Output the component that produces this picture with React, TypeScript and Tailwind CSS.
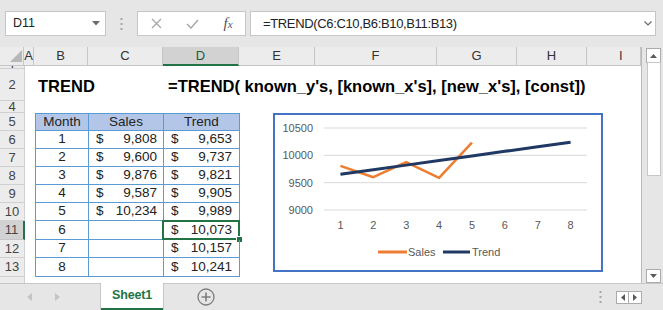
import React from "react";

const cols = [
  { id: "A", w: "w-[10px]", pad: "justify-center" },
  { id: "B", w: "w-[54px]", pad: "justify-center" },
  { id: "C", w: "w-[75px]", pad: "justify-center" },
  { id: "D", w: "w-[76px]", pad: "justify-center" },
  { id: "E", w: "w-[76px]", pad: "justify-center" },
  { id: "F", w: "w-[122px]", pad: "justify-center" },
  { id: "G", w: "w-[80px]", pad: "justify-center" },
  { id: "H", w: "w-[70px]", pad: "justify-center" },
  { id: "I", w: "w-[54px]", pad: "justify-start pl-[32px]" },
];

const data = [
  { r: "6", m: "1", s: "9,808", t: "9,653", h: "h-[18px]" },
  { r: "7", m: "2", s: "9,600", t: "9,737", h: "h-[18px]" },
  { r: "8", m: "3", s: "9,876", t: "9,821", h: "h-[18px]" },
  { r: "9", m: "4", s: "9,587", t: "9,905", h: "h-[18px]" },
  { r: "10", m: "5", s: "10,234", t: "9,989", h: "h-[18px]" },
  { r: "11", m: "6", s: "", t: "10,073", h: "h-[19px]" },
  { r: "12", m: "7", s: "", t: "10,157", h: "h-[18px]" },
  { r: "13", m: "8", s: "", t: "10,241", h: "h-[19px]" },
];

const sales = [9808, 9600, 9876, 9587, 10234];
const trend = [9653, 9737, 9821, 9905, 9989, 10073, 10157, 10241];

function RowHead({ n, active }: { n: string; active?: boolean }) {
  if (active) {
    return (
      <div className="w-[25px] shrink-0 flex items-center justify-center bg-[#d2d2d2] border-r-2 border-r-[#217346] border-b border-b-[#c6c6c6] text-[13px] text-[#444] overflow-hidden">
        {n}
      </div>
    );
  }
  return (
    <div className="w-[25px] shrink-0 flex items-center justify-center bg-[#ececec] border-r border-b border-[#d0d0d0] text-[13px] text-[#444] overflow-hidden">
      {n}
    </div>
  );
}

function Chart() {
  const X = (i: number) => 49 + 32.875 * (i - 0.5);
  const Y = (v: number) => 95 - ((v - 9000) * 82) / 1500;
  const grid = [10500, 10000, 9500, 9000];
  return (
    <div className="absolute left-[273px] top-[66px] w-[330px] h-[159px] border-2 border-[#4472c4] bg-white">
      <svg width="326" height="155" className="text-[11px]">
        {grid.map((g) => (
          <g key={g}>
            <line x1="49" x2="312" y1={Y(g)} y2={Y(g)} stroke="#d9d9d9" strokeWidth="1" />
            <text x="38" y={Y(g) + 4} textAnchor="end" fill="#595959">
              {g}
            </text>
          </g>
        ))}
        {trend.map((_, i) => (
          <text key={i} x={X(i + 1)} y="114" textAnchor="middle" fill="#595959">
            {i + 1}
          </text>
        ))}
        <polyline
          points={sales.map((v, i) => `${X(i + 1)},${Y(v)}`).join(" ")}
          fill="none"
          stroke="#ed7d31"
          strokeWidth="2.5"
          strokeLinejoin="round"
        />
        <polyline
          points={trend.map((v, i) => `${X(i + 1)},${Y(v)}`).join(" ")}
          fill="none"
          stroke="#203864"
          strokeWidth="3"
          strokeLinejoin="round"
        />
        <line x1="103" x2="132" y1="137" y2="137" stroke="#ed7d31" strokeWidth="3" />
        <text x="133" y="141" fill="#595959">Sales</text>
        <line x1="168" x2="195" y1="137" y2="137" stroke="#203864" strokeWidth="3" />
        <text x="197" y="141" fill="#595959">Trend</text>
      </svg>
    </div>
  );
}

export default function App() {
  return (
    <div className="w-[663px] h-[310px] overflow-hidden bg-[#e6e6e6] font-['Liberation_Sans',Arial,sans-serif] text-[#222]">
      {/* formula bar */}
      <div className="h-[47px] flex items-start pt-[11px] pl-[5px]">
        <div className="w-[101px] h-[25px] bg-white border border-[#c6c6c6] flex items-center justify-between pl-[7px] pr-[5px] text-[12.5px]">
          <span>D11</span>
          <svg width="8" height="5" viewBox="0 0 8 5">
            <polygon points="0,0 8,0 4,4.5" fill="#6b6b6b" />
          </svg>
        </div>
        <div className="w-[31px] h-[25px] flex items-center justify-center">
          <svg width="3" height="12" viewBox="0 0 3 12">
            <rect x="0.5" y="0" width="2" height="2" fill="#a6a6a6" />
            <rect x="0.5" y="5" width="2" height="2" fill="#a6a6a6" />
            <rect x="0.5" y="10" width="2" height="2" fill="#a6a6a6" />
          </svg>
        </div>
        <div className="w-[109px] h-[25px] bg-white border border-[#c6c6c6] grid grid-cols-[36px_36px_36px] items-center">
          <div className="flex justify-center">
            <svg width="11" height="11" viewBox="0 0 11 11">
              <path d="M1 1L10 10M10 1L1 10" stroke="#a8a8a8" strokeWidth="1.3" />
            </svg>
          </div>
          <div className="flex justify-center">
            <svg width="13" height="10" viewBox="0 0 13 10">
              <path d="M1 5L5 9L12 1" stroke="#a8a8a8" strokeWidth="1.5" fill="none" />
            </svg>
          </div>
          <div className="flex justify-center items-baseline font-['Liberation_Serif',serif] italic text-[#555]">
            <span className="text-[15px]">f</span>
            <span className="text-[11px]">x</span>
          </div>
        </div>
        <div className="ml-[4px] w-[406px] h-[25px] bg-white border border-[#c6c6c6] flex items-center justify-between pl-[12px] pr-[3px]">
          <span className="text-[13px] tracking-[-0.35px]">=TREND(C6:C10,B6:B10,B11:B13)</span>
          <svg width="8" height="5" viewBox="0 0 8 5">
            <path d="M0.5 0.5L4 4L7.5 0.5" stroke="#6b6b6b" strokeWidth="1.2" fill="none" />
          </svg>
        </div>
      </div>

      {/* sheet + scrollbar */}
      <div className="flex h-[236px]">
        <div className="relative w-[642px] flex flex-col bg-white border-r border-[#b9b9b9]">
          {/* column headers */}
          <div className="flex h-[19px] shrink-0">
            <div className="w-[25px] bg-[#ececec] border-r border-b border-[#c6c6c6] relative">
              <svg width="25" height="19" className="absolute left-0 top-0">
                <polygon points="22,3 22,15 10,15" fill="#b7b7b7" />
              </svg>
            </div>
            {cols.map((c) =>
              c.id === "D" ? (
                <div
                  key={c.id}
                  className={`${c.w} shrink-0 flex items-center justify-center bg-[#d2d2d2] border-r border-r-[#c6c6c6] border-b-2 border-b-[#217346] text-[13px] text-[#1e5d38]`}
                >
                  {c.id}
                </div>
              ) : (
                <div
                  key={c.id}
                  className={`${c.w} shrink-0 flex items-center ${c.pad} bg-[#ececec] border-r border-b border-[#c6c6c6] text-[13px] text-[#333] overflow-hidden`}
                >
                  {c.id}
                </div>
              )
            )}
          </div>

          {/* row 1 (nearly hidden) */}
          <div className="flex h-[3px] shrink-0">
            <div className="w-[25px] shrink-0 flex justify-center items-end bg-[#ececec] border-r border-b border-[#d0d0d0] overflow-hidden">
              <span className="block h-[2px] overflow-hidden text-[13px] leading-[2px] text-[#444]">1</span>
            </div>
          </div>

          {/* row 2 */}
          <div className="flex h-[32px] shrink-0">
            <RowHead n="2" />
            <div className="w-[10px] shrink-0" />
            <div className="w-[54px] shrink-0 flex items-end pb-[5px] pl-[3px] whitespace-nowrap">
              <span className="text-[16.5px] leading-[19px] font-bold text-black">TREND</span>
            </div>
            <div className="w-[75px] shrink-0" />
            <div className="w-[76px] shrink-0 flex items-end pb-[5px] pl-[4px] whitespace-nowrap">
              <span className="text-[16.5px] leading-[19px] font-bold text-black">
                =TREND( known_y's, [known_x's], [new_x's], [const])
              </span>
            </div>
          </div>

          {/* row 4 (row 3 hidden) */}
          <div className="flex h-[12px] shrink-0">
            <RowHead n="4" />
          </div>

          {/* row 5: table header */}
          <div className="flex h-[18px] shrink-0 text-[13.5px]">
            <RowHead n="5" />
            <div className="w-[10px] shrink-0" />
            <div className="w-[54px] shrink-0 flex items-center justify-center bg-[#b4c6e7] border border-[#5b9bd5]">
              Month
            </div>
            <div className="w-[75px] shrink-0 flex items-center justify-center bg-[#b4c6e7] border-y border-r border-[#5b9bd5]">
              Sales
            </div>
            <div className="w-[76px] shrink-0 flex items-center justify-center bg-[#b4c6e7] border-y border-r border-[#5b9bd5]">
              Trend
            </div>
          </div>

          {/* rows 6-13 */}
          {data.map((d) => (
            <div key={d.r} className={`flex ${d.h} shrink-0 text-[13.5px]`}>
              <RowHead n={d.r} active={d.r === "11"} />
              <div className="w-[10px] shrink-0" />
              <div className="w-[54px] shrink-0 flex items-center justify-center border-x border-b border-[#5b9bd5]">
                {d.m}
              </div>
              <div className="w-[75px] shrink-0 flex items-center justify-between pl-[7px] pr-[6px] border-r border-b border-[#5b9bd5]">
                {d.s && (
                  <>
                    <span>$</span>
                    <span>{d.s}</span>
                  </>
                )}
              </div>
              <div className="relative w-[76px] shrink-0 flex items-center justify-between pl-[7px] pr-[7px] border-r border-b border-[#5b9bd5]">
                <span>$</span>
                <span>{d.t}</span>
                {d.r === "11" && (
                  <>
                    <div className="absolute -left-[2px] -top-[1px] -right-[1px] -bottom-[1px] border-2 border-[#217346]" />
                    <div className="absolute -right-[4px] -bottom-[4px] w-[7px] h-[7px] bg-[#217346] border border-white" />
                  </>
                )}
              </div>
            </div>
          ))}

          {/* row 14 partial */}
          <div className="flex flex-1">
            <div className="w-[25px] shrink-0 bg-[#ececec] border-r border-[#d0d0d0]" />
          </div>

          <Chart />
        </div>

        {/* vertical scrollbar */}
        <div className="w-[21px] flex flex-col items-center pt-[1px] pl-[2px]">
          <div className="w-[15px] h-[15px] bg-white border border-[#ababab] flex items-center justify-center">
            <svg width="7" height="4" viewBox="0 0 7 4">
              <polygon points="0,4 7,4 3.5,0" fill="#5a5a5a" />
            </svg>
          </div>
          <div className="w-[14px] h-[114px] bg-white border border-[#c6c6c6] -mt-[1px]" />
          <div className="flex-1" />
          <div className="w-[15px] h-[14px] bg-white border border-[#ababab] flex items-center justify-center">
            <svg width="7" height="4" viewBox="0 0 7 4">
              <polygon points="0,0 7,0 3.5,4" fill="#5a5a5a" />
            </svg>
          </div>
        </div>
      </div>

      {/* sheet tabs */}
      <div className="h-[27px] flex items-stretch border-t border-[#c6c6c6]">
        <div className="w-[100px] flex items-center">
          <svg width="5" height="8" viewBox="0 0 5 8" className="ml-[27px]">
            <polygon points="5,0 5,8 0,4" fill="#c4c4c4" />
          </svg>
          <svg width="5" height="8" viewBox="0 0 5 8" className="ml-[23px]">
            <polygon points="0,0 0,8 5,4" fill="#c4c4c4" />
          </svg>
        </div>
        <div className="w-[64px] -mt-[1px] h-[28px] bg-white border-x border-[#c6c6c6] flex flex-col">
          <div className="flex-1 flex items-center justify-center text-[12.5px] font-bold text-[#217346] tracking-[-0.2px]">
            Sheet1
          </div>
          <div className="h-[2px] bg-[#217346] mb-[1px]" />
        </div>
        <div className="ml-[33px] flex items-center">
          <svg width="18" height="18" viewBox="0 0 18 18">
            <circle cx="9" cy="9" r="8" stroke="#7d7d7d" strokeWidth="1.3" fill="none" />
            <path d="M9 4.5V13.5M4.5 9H13.5" stroke="#7d7d7d" strokeWidth="1.6" />
          </svg>
        </div>
        <div className="flex-1" />
        <div className="flex items-center pr-[21px]">
          <svg width="3" height="12" viewBox="0 0 3 12" className="mr-[14px]">
            <rect x="0.5" y="0" width="2" height="2" fill="#a6a6a6" />
            <rect x="0.5" y="5" width="2" height="2" fill="#a6a6a6" />
            <rect x="0.5" y="10" width="2" height="2" fill="#a6a6a6" />
          </svg>
          <div className="flex h-[13px]">
            <div className="w-[13px] bg-white border border-[#ababab] flex items-center justify-center">
              <svg width="4" height="7" viewBox="0 0 4 7">
                <polygon points="4,0 4,7 0,3.5" fill="#5a5a5a" />
              </svg>
            </div>
            <div className="w-[13px] bg-white border-y border-r border-[#ababab] flex items-center justify-center">
              <svg width="4" height="7" viewBox="0 0 4 7">
                <polygon points="0,0 0,7 4,3.5" fill="#5a5a5a" />
              </svg>
            </div>
          </div>
        </div>
      </div>
    </div>
  );
}
